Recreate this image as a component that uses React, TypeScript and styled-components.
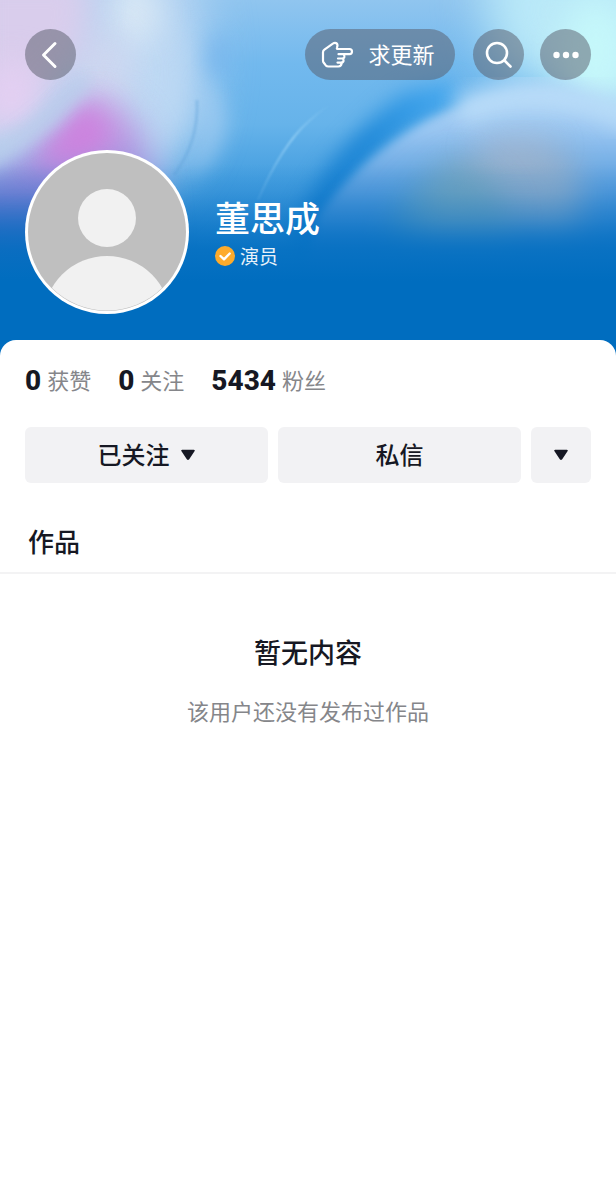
import React from "react";
import styled, { createGlobalStyle } from "styled-components";

const GlobalStyle = createGlobalStyle`
  *, *::before, *::after { box-sizing: border-box; }
  body {
    margin: 0;
    background: #fff;
    color: #161823;
    font-family: "Noto Sans CJK SC", "Noto Sans", sans-serif;
  }
  h1, h2, p, dl, dd { margin: 0; }
  button { font-family: inherit; border: 0; padding: 0; cursor: pointer; }
`;

const Page = styled.main`
  min-height: 100vh;
  display: flex;
  flex-direction: column;
`;

const Hero = styled.header`
  position: relative;
  padding: 29px 25px 42px;
  background: #006dbf;
  overflow: hidden;
`;

const Cover = styled.svg`
  position: absolute;
  inset: 0;
  width: 100%;
  height: 100%;
`;

const TopBar = styled.nav`
  position: relative;
  display: flex;
  justify-content: space-between;
  margin-bottom: 70px;
`;

const Actions = styled.div`
  display: flex;
  gap: 18px;
  & > :last-child { margin-left: -2px; }
`;

const RoundButton = styled.button`
  display: flex;
  align-items: center;
  justify-content: center;
  width: 51px;
  height: 51px;
  border-radius: 26px;
  background: rgba(86, 90, 104, 0.5);
  color: #fff;
`;

const PillButton = styled(RoundButton)`
  width: 150px;
  padding-right: 4px;
  gap: 14px;
  font-size: 22px;
  line-height: 32px;
`;

const ButtonLabel = styled.span`
  padding-bottom: 3px;
`;

const Profile = styled.section`
  position: relative;
  display: flex;
  align-items: center;
  gap: 26px;
`;

const Avatar = styled.svg`
  width: 164px;
  height: 164px;
  flex: none;
`;

const Name = styled.h1`
  color: #fff;
  font-size: 35px;
  font-weight: 500;
  line-height: 48px;
`;

const Role = styled.p`
  display: flex;
  align-items: center;
  gap: 5px;
  padding: 2px 0;
  color: #e8f2fa;
  font-size: 19px;
  line-height: 26px;
`;

const Sheet = styled.section`
  position: relative;
  flex: 1;
  margin-top: -16px;
  border-radius: 16px 16px 0 0;
  background: #fff;
`;

const Stats = styled.dl`
  display: flex;
  gap: 27px;
  padding: 25px 25px 0;
`;

const Stat = styled.div`
  display: flex;
  flex-direction: row-reverse;
  align-items: center;
  gap: 6px;
  line-height: 32px;
`;

const StatLabel = styled.dt`
  padding-bottom: 4px;
  color: #85868a;
  font-size: 22px;
  font-weight: 400;
  line-height: 28px;
`;

const StatValue = styled.dd`
  font-family: Roboto, sans-serif;
  font-size: 28px;
  font-weight: 800;
`;

const ButtonRow = styled.div`
  display: grid;
  grid-template-columns: 1fr 1fr 60px;
  gap: 10px;
  padding: 30px 25px 0;
`;

const GreyButton = styled.button`
  display: flex;
  align-items: center;
  justify-content: center;
  gap: 10px;
  height: 56px;
  border-radius: 6px;
  background: #f2f2f4;
  color: #161823;
  font-size: 24px;
  font-weight: 500;
`;

const Tabs = styled.div`
  padding: 37px 28px 10px;
  border-bottom: 2px solid #f3f3f4;
`;

const TabTitle = styled.h2`
  font-size: 26px;
  font-weight: 500;
  line-height: 42px;
`;

const Empty = styled.div`
  padding: 57px 25px;
  text-align: center;
`;

const EmptyTitle = styled.h2`
  font-size: 27px;
  font-weight: 500;
  line-height: 42px;
`;

const EmptyText = styled.p`
  margin-top: 21px;
  color: #85868a;
  font-size: 22px;
  font-weight: 400;
  line-height: 32px;
`;

const CoverArt = () => (
  <Cover viewBox="0 0 616 356" preserveAspectRatio="none" aria-hidden="true" colorInterpolationFilters="sRGB">
    <defs>
      <linearGradient id="sky" x1="0" y1="0" x2="0" y2="1">
        <stop offset="0" stopColor="#90c5ef" />
        <stop offset="0.18" stopColor="#72b9ee" />
        <stop offset="0.35" stopColor="#66b3ea" />
        <stop offset="0.5" stopColor="#469fe0" />
        <stop offset="0.7" stopColor="#2485d2" />
      </linearGradient>
      <linearGradient id="fade" x1="0" y1="0" x2="0" y2="1">
        <stop offset="0.46" stopColor="#006dbf" stopOpacity="0" />
        <stop offset="0.54" stopColor="#006dbf" stopOpacity="0.14" />
        <stop offset="0.62" stopColor="#006dbf" stopOpacity="0.42" />
        <stop offset="0.7" stopColor="#006dbf" stopOpacity="0.78" />
        <stop offset="0.79" stopColor="#006dbf" />
      </linearGradient>
      <linearGradient id="arch" x1="0" y1="85" x2="0" y2="240" gradientUnits="userSpaceOnUse">
        <stop offset="0" stopColor="#b4d8f6" />
        <stop offset="0.3" stopColor="#98c5f1" />
        <stop offset="0.65" stopColor="#5b9fde" />
        <stop offset="1" stopColor="#2a82d0" />
      </linearGradient>
      <linearGradient id="trough" x1="430" y1="80" x2="300" y2="220" gradientUnits="userSpaceOnUse">
        <stop offset="0" stopColor="#42a6ee" />
        <stop offset="0.45" stopColor="#2089d8" />
        <stop offset="1" stopColor="#1279ca" />
      </linearGradient>
      <linearGradient id="violet" x1="0" y1="100" x2="0" y2="240" gradientUnits="userSpaceOnUse">
        <stop offset="0" stopColor="#cdb0e8" />
        <stop offset="0.4" stopColor="#ab96e0" />
        <stop offset="0.75" stopColor="#6e7bd2" />
        <stop offset="1" stopColor="#3a6fc8" />
      </linearGradient>
      <linearGradient id="strand" x1="255" y1="205" x2="330" y2="105" gradientUnits="userSpaceOnUse">
        <stop offset="0" stopColor="#7cc0f0" stopOpacity="0.2" />
        <stop offset="0.6" stopColor="#9bd4f7" stopOpacity="0.8" />
        <stop offset="1" stopColor="#8fcdf5" stopOpacity="0" />
      </linearGradient>
      <filter id="b1" x="-20%" y="-20%" width="140%" height="140%"><feGaussianBlur stdDeviation="1" /></filter>
      <filter id="b5" x="-50%" y="-50%" width="200%" height="200%"><feGaussianBlur stdDeviation="5" /></filter>
      <filter id="b8" x="-50%" y="-50%" width="200%" height="200%"><feGaussianBlur stdDeviation="8" /></filter>
      <filter id="b10" x="-60%" y="-60%" width="220%" height="220%"><feGaussianBlur stdDeviation="10" /></filter>
      <filter id="b16" x="-100%" y="-100%" width="300%" height="300%"><feGaussianBlur stdDeviation="16" /></filter>
      <filter id="b24" x="-100%" y="-100%" width="300%" height="300%"><feGaussianBlur stdDeviation="24" /></filter>
    </defs>
    <rect width="616" height="356" fill="url(#sky)" />

    <path d="M-60-60H180Q215 30 200 110Q180 170 150 195H-60Z" fill="#b9d5f2" filter="url(#b24)" />
    <path d="M150-20Q205 50 194 115L165 150L110 60Z" fill="#bfdaf4" opacity="0.7" filter="url(#b16)" />
    <path d="M202 75Q230 100 226 130Q220 160 188 180Q206 130 202 75Z" fill="#abd0f2" opacity="0.6" filter="url(#b10)" />
    <ellipse cx="135" cy="12" rx="22" ry="34" fill="#dbe9f5" filter="url(#b16)" />
    <ellipse cx="105" cy="70" rx="30" ry="40" fill="#d3d8f0" opacity="0.8" filter="url(#b16)" />
    <path d="M-30-30H85Q105 40 60 80Q30 115-30 140Z" fill="#d9cdec" filter="url(#b16)" />
    <ellipse cx="12" cy="95" rx="26" ry="34" fill="#e4cff2" filter="url(#b16)" />
    <path d="M-40 185Q50 150 85 100Q115 95 138 125Q155 150 160 260H-40Z" fill="url(#violet)" filter="url(#b16)" />
    <path d="M30 162Q68 130 88 95Q108 105 118 140Q90 165 30 162Z" fill="#d081de" opacity="0.85" filter="url(#b16)" />
    <path d="M40 158Q70 132 86 104Q98 120 100 142Q80 160 40 158Z" fill="#ce80de" opacity="0.7" filter="url(#b10)" />
    <path d="M-20 162Q45 130 85 78" fill="none" stroke="#b9cfeb" strokeWidth="16" opacity="0.85" filter="url(#b8)" />
    <path d="M-30 225H80V290H-30Z" fill="#2a69c2" opacity="0.6" filter="url(#b16)" />
    <path d="M174 175Q199 142 197 100" fill="none" stroke="#5c9fd8" strokeWidth="3" opacity="0.35" filter="url(#b1)" />

    <ellipse cx="218" cy="56" rx="12" ry="22" fill="#72b2ec" opacity="0.6" filter="url(#b10)" />
    <path d="M290 240Q322 150 405 92L455 82V105Q350 150 320 250Z" fill="url(#trough)" filter="url(#b10)" />
    <path d="M258 200Q282 145 308 122Q325 106 345 96" fill="none" stroke="url(#strand)" strokeWidth="2" filter="url(#b1)" />

    <path d="M490-50H680V160Q580 90 510 75Q475 30 490-50Z" fill="#bae9f8" filter="url(#b24)" />
    <ellipse cx="596" cy="52" rx="36" ry="54" fill="#c5f7fa" filter="url(#b16)" />
    <path d="M318 216Q372 145 445 112Q500 90 550 90Q590 95 660 140V290H300Z" fill="url(#arch)" filter="url(#b5)" />
    <path d="M460 112Q540 72 640 122" fill="none" stroke="#b8dbf8" strokeWidth="28" filter="url(#b10)" />
    <path d="M415 230Q430 172 480 150Q530 135 570 152Q590 185 575 230Z" fill="#9fb0c4" opacity="0.7" filter="url(#b16)" />
    <path d="M385 235Q405 180 455 160Q510 175 510 235Z" fill="#62a0b8" opacity="0.6" filter="url(#b16)" />
    <ellipse cx="515" cy="147" rx="42" ry="9" fill="#b8b8c6" opacity="0.5" filter="url(#b16)" />
    <rect width="616" height="356" fill="url(#fade)" />
  </Cover>
);

const BackIcon = () => (
  <svg width="26" height="30" viewBox="0 0 26 30" fill="none" stroke="#fff" strokeWidth="3" strokeLinecap="round" strokeLinejoin="round" aria-hidden="true">
    <path d="M17 3.5L5.5 15L17 26.5" />
  </svg>
);

const HandIcon = () => (
  <svg width="33" height="28" viewBox="0 0 33 28" fill="none" stroke="#fff" strokeWidth="2.2" strokeLinecap="round" strokeLinejoin="round" aria-hidden="true">
    <path d="M17.5 13.2H28.5Q31 13.2 31 10.6Q31 8 28.5 8H16.8Q15.6 8 15.9 7L16.5 4.6Q16.5 1.8 14 1.8Q13 1.8 12.2 2.4L3.4 8.6Q2 9.6 2 11.2V19.4Q2 20.8 2.8 21.8L4.8 24.4Q5.8 25.5 7.4 25.5H17.3Q20.6 25.5 20.6 21.8" />
    <path d="M23 13.6Q24.6 17.5 21 17.5H17M22.2 17.8Q23.4 21.6 20 21.6H16.5" />
  </svg>
);

const SearchIcon = () => (
  <svg width="30" height="30" viewBox="0 0 30 30" fill="none" stroke="#fff" strokeWidth="2.6" strokeLinecap="round" aria-hidden="true">
    <circle cx="13" cy="13" r="10" />
    <path d="M20.5 20.5L26.5 26.5" />
  </svg>
);

const MoreIcon = () => (
  <svg width="28" height="8" viewBox="0 0 28 8" fill="#fff" aria-hidden="true">
    <circle cx="4.5" cy="4" r="3.2" />
    <circle cx="14" cy="4" r="3.2" />
    <circle cx="23.5" cy="4" r="3.2" />
  </svg>
);

const CheckBadge = () => (
  <svg width="20" height="20" viewBox="0 0 20 20" fill="none" aria-hidden="true">
    <circle cx="10" cy="10" r="10" fill="#fdab2c" />
    <path d="M5.5 10L9 13.3L14.7 7.5" stroke="#fff" strokeWidth="2.4" strokeLinecap="round" strokeLinejoin="round" />
  </svg>
);

const CaretIcon = () => (
  <svg width="16" height="12" viewBox="0 0 16 12" fill="#161823" aria-hidden="true">
    <path d="M2.2 .8H13.8Q15.6 .8 14.5 2.3L9.2 10.2Q8 11.7 6.8 10.2L1.5 2.3Q.4 .8 2.2 .8Z" />
  </svg>
);

const AvatarImage = () => (
  <Avatar viewBox="0 0 164 164" role="img" aria-label="头像">
    <defs>
      <clipPath id="face"><circle cx="82" cy="82" r="78.5" /></clipPath>
    </defs>
    <circle cx="82" cy="82" r="82" fill="#fff" />
    <circle cx="82" cy="82" r="79" fill="#bfbfbf" />
    <g clipPath="url(#face)" fill="#f1f1f1">
      <circle cx="82" cy="68" r="29" />
      <circle cx="82" cy="169.5" r="63.5" />
    </g>
  </Avatar>
);

const stats = [
  { value: "0", label: "获赞" },
  { value: "0", label: "关注" },
  { value: "5434", label: "粉丝" },
];

export default function App() {
  return (
    <>
      <GlobalStyle />
      <Page>
        <Hero>
          <CoverArt />
          <TopBar>
            <RoundButton aria-label="返回"><BackIcon /></RoundButton>
            <Actions>
              <PillButton><HandIcon /><ButtonLabel>求更新</ButtonLabel></PillButton>
              <RoundButton aria-label="搜索"><SearchIcon /></RoundButton>
              <RoundButton aria-label="更多"><MoreIcon /></RoundButton>
            </Actions>
          </TopBar>
          <Profile>
            <AvatarImage />
            <div>
              <Name>董思成</Name>
              <Role><CheckBadge />演员</Role>
            </div>
          </Profile>
        </Hero>
        <Sheet>
          <Stats>
            {stats.map((s) => (
              <Stat key={s.label}>
                <StatLabel>{s.label}</StatLabel>
                <StatValue>{s.value}</StatValue>
              </Stat>
            ))}
          </Stats>
          <ButtonRow>
            <GreyButton><ButtonLabel>已关注</ButtonLabel><CaretIcon /></GreyButton>
            <GreyButton><ButtonLabel>私信</ButtonLabel></GreyButton>
            <GreyButton aria-label="展开"><CaretIcon /></GreyButton>
          </ButtonRow>
          <Tabs><TabTitle>作品</TabTitle></Tabs>
          <Empty>
            <EmptyTitle>暂无内容</EmptyTitle>
            <EmptyText>该用户还没有发布过作品</EmptyText>
          </Empty>
        </Sheet>
      </Page>
    </>
  );
}
